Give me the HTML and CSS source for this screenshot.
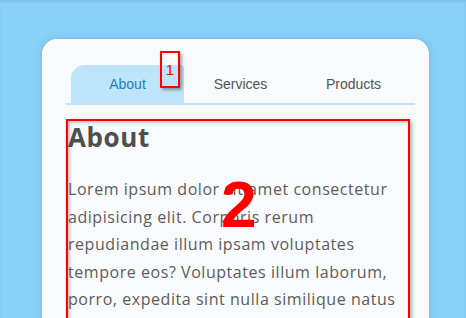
FILE: index.html
```html
<!DOCTYPE html>
<html lang="en">
<head>
    <meta charset="UTF-8">
    <meta name="viewport" content="width=device-width, initial-scale=1.0">
    <title>Tabs</title>
    <link rel="stylesheet" href="styles.css">
</head>
<body>
    <div class="card">
        <div class="tabs">
            <button class="tab active">About</button>
            <button class="tab">Services</button>
            <button class="tab">Products</button>
            <span class="mark mark-1">1</span>
        </div>
        <div class="panel">
            <span class="mark-num">2</span>
            <h2>About</h2>
            <p>Lorem ipsum dolor sit amet consectetur adipisicing elit. Corporis rerum repudiandae illum ipsam voluptates tempore eos? Voluptates illum laborum, porro, expedita sint nulla similique natus</p>
        </div>
    </div>
</body>
</html>
```

FILE: styles.css
```css
html, body {
    margin: 0;
    height: 100%;
}
body {
    background: #89d0f9;
    box-shadow: inset 0 2px 2px rgba(0,0,0,0.08);
    padding-top: 39px;
    box-sizing: border-box;
    overflow: hidden;
    font-family: "Open Sans", sans-serif;
}
.card {
    margin-left: 42px;
    width: 387px;
    height: 320px;
    box-sizing: border-box;
    background: #f8fafc;
    border-radius: 15px 15px 0 0;
    box-shadow: 0 0 8px rgba(0,0,0,0.12);
    padding: 26px 14px 0 24px;
}
.tabs {
    position: relative;
    display: flex;
    padding-left: 5px;
    border-bottom: 2px solid #c6e4f6;
}
.tab {
    width: 113px;
    height: 38px;
    border: none;
    background: none;
    font-family: "Liberation Sans", Arial, sans-serif;
    font-size: 14px;
    color: #555;
    padding: 0;
    cursor: pointer;
}
.tab.active {
    background: #bee4fa;
    color: #2a7db7;
    border-radius: 14px 4px 0 0;
}
.mark {
    position: absolute;
    left: 94px;
    top: -14px;
    width: 16px;
    height: 33px;
    border: 2px solid #f00;
    box-shadow: 2px 2px 3px rgba(0,0,0,0.35);
    color: #f00;
    font-family: "Liberation Sans", Arial, sans-serif;
    font-size: 15px;
    text-align: center;
    line-height: 34px;
}
.panel {
    position: relative;
    margin-top: 14px;
    width: 344px;
    height: 220px;
    box-sizing: border-box;
    border: 2px solid #f00;
    box-shadow: 2px 2px 4px rgba(0,0,0,0.3), inset 2px 2px 3px rgba(0,0,0,0.2);
    color: #555;
}
.mark-num {
    position: absolute;
    left: 153px;
    top: 52px;
    color: #f00;
    font-family: "Liberation Sans", Arial, sans-serif;
    font-size: 64px;
    font-weight: bold;
    line-height: 1;
}
h2 {
    margin: 0;
    padding-top: 0;
    font-size: 26px;
    font-weight: 700;
    letter-spacing: 0.6px;
    line-height: 32px;
    color: #4f4f4f;
}
p {
    margin: 23px 0 0;
    font-size: 16px;
    letter-spacing: 0.55px;
    line-height: 27.5px;
    color: #5c5c5c;
}
```
